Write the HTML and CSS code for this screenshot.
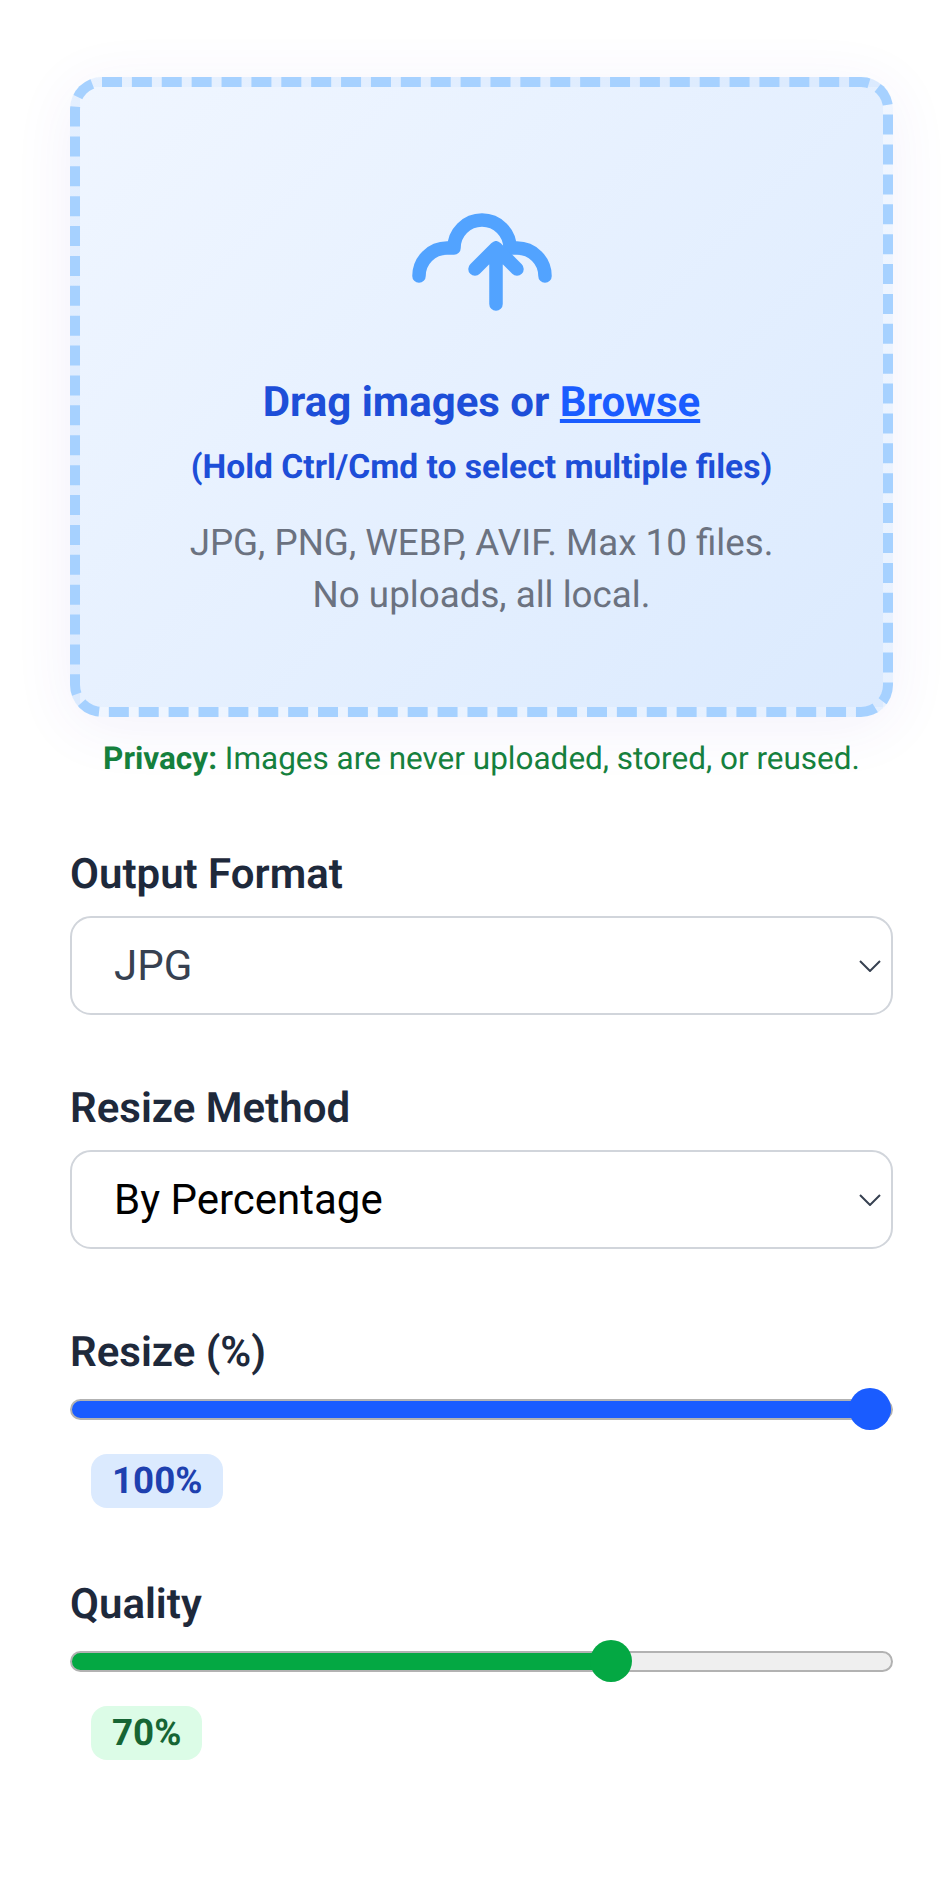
FILE: index.html
```html
<!DOCTYPE html>
<html lang="en">
  <head>
    <meta charset="UTF-8" />
    <meta name="viewport" content="width=device-width, initial-scale=1.0" />
    <title>Image Resizer</title>
    <link rel="stylesheet" href="styles.css">
  </head>
  <body>
    <div class="container">
      <div class="dropzone">
        <svg class="upload-icon" viewBox="25 15 153 115" width="153" height="115" aria-hidden="true">
          <path d="M39 86A28 28 0 0 1 67 58H74A28 28 0 0 1 130 58H137A28 28 0 0 1 165 86" />
          <path d="M116 114V58M95 79L116 58L137 79" />
        </svg>
        <p class="drop-title">Drag images or <a href="#" class="browse">Browse</a></p>
        <p class="drop-hint">(Hold Ctrl/Cmd to select multiple files)</p>
        <p class="drop-note">JPG, PNG, WEBP, AVIF. Max 10 files.<br />No uploads, all local.</p>
      </div>
      <p class="privacy"><strong>Privacy:</strong> Images are never uploaded, stored, or reused.</p>

      <div class="field">
        <label for="format">Output Format</label>
        <select id="format" class="muted">
          <option>JPG</option>
          <option>PNG</option>
          <option>WEBP</option>
          <option>AVIF</option>
        </select>
      </div>

      <div class="field">
        <label for="method">Resize Method</label>
        <select id="method">
          <option>By Percentage</option>
          <option>By Dimensions</option>
        </select>
      </div>

      <div class="field slider-field">
        <label for="resize">Resize (%)</label>
        <input type="range" id="resize" class="blue" min="1" max="100" value="100" style="--pos: 100%" />
        <span class="badge badge-blue">100%</span>
      </div>

      <div class="field slider-field quality">
        <label for="quality">Quality</label>
        <input type="range" id="quality" class="green" min="10" max="100" value="70" style="--pos: 66.7%" />
        <span class="badge badge-green">70%</span>
      </div>
    </div>
  </body>
</html>
```
FILE: styles.css
```css
* {
  box-sizing: border-box;
}
body {
  margin: 0;
  background-color: #fff;
  font-family: Roboto, "Liberation Sans", sans-serif;
  color: #1e293b;
  text-rendering: geometricPrecision;
}
p {
  margin: 0;
}
.container {
  width: 823px;
  margin-left: 70px;
  padding: 77px 0 105px;
}
.dropzone {
  height: 640px;
  padding-top: 118px;
  border: 10px dashed #a6d1ff;
  border-radius: 32px;
  background: linear-gradient(135deg, #f0f6ff 0%, #dbeafe 100%);
  box-shadow: 0 10px 62px rgba(90, 60, 200, 0.07);
  text-align: center;
}
.upload-icon {
  display: block;
  margin: 0 auto;
  fill: none;
  stroke: #52a3ff;
  stroke-width: 13.5;
  stroke-linecap: round;
  stroke-linejoin: round;
}
.drop-title {
  margin-top: 57px;
  font-size: 42px;
  line-height: 52px;
  font-weight: 700;
  color: #1d4ed8;
}
.browse {
  color: #1a5cff;
}
.drop-hint {
  margin-top: 18px;
  font-size: 33.6px;
  line-height: 42px;
  font-weight: 700;
  color: #1d4ed8;
}
.drop-note {
  margin-top: 28px;
  font-size: 36.75px;
  line-height: 52px;
  color: #6b7280;
}
.privacy {
  margin-top: 22px;
  font-size: 31.5px;
  line-height: 40px;
  text-align: center;
  color: #15803d;
}
.field {
  margin-top: 71px;
}
.field + .field {
  margin-top: 69px;
}
.field + .slider-field {
  margin-top: 79px;
}
.field + .quality {
  margin-top: 72px;
}
label {
  display: block;
  margin-bottom: 16px;
  font-size: 42px;
  line-height: 50px;
  font-weight: 600;
}
select {
  display: block;
  width: 100%;
  height: 99px;
  padding: 0 60px 0 42px;
  border: 2px solid #d1d5db;
  border-radius: 21px;
  appearance: none;
  background: #fff url("data:image/svg+xml,%3Csvg xmlns='http://www.w3.org/2000/svg' viewBox='0 0 22 12'%3E%3Cpath d='M1 1L11 11L21 1' fill='none' stroke='%23374151' stroke-width='2'/%3E%3C/svg%3E") no-repeat right 10px center / 22px 12px;
  font-family: inherit;
  font-size: 42px;
  color: #000;
}
select.muted {
  color: #374151;
}
.slider-field label {
  margin-bottom: 10px;
}
input[type="range"] {
  display: block;
  width: 100%;
  height: 42px;
  margin: 0;
  appearance: none;
  background: transparent;
}
input[type="range"]::-webkit-slider-runnable-track {
  height: 21px;
  border: 2px solid #b2b2b2;
  border-radius: 11px;
  background: linear-gradient(to right, var(--fill) var(--pos), #efefef var(--pos));
}
input[type="range"]::-webkit-slider-thumb {
  appearance: none;
  width: 42px;
  height: 42px;
  margin-top: -12.5px;
  border-radius: 50%;
  background: var(--fill);
}
.blue {
  --fill: #1a5cff;
}
.green {
  --fill: #04a843;
}
.badge {
  display: inline-block;
  margin: 24px 0 0 21px;
  padding: 0 21px;
  height: 54px;
  border-radius: 16px;
  font-size: 36.75px;
  line-height: 54px;
  font-weight: 700;
}
.badge-blue {
  background-color: #dbeafe;
  color: #1e40af;
}
.badge-green {
  background-color: #dcfce7;
  color: #166534;
}
```
